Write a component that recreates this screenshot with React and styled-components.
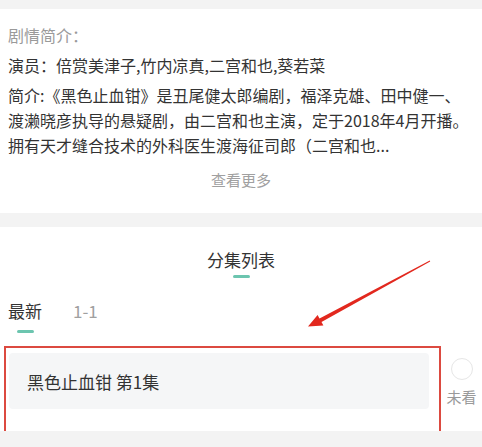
import React from "react";
import styled, { createGlobalStyle } from "styled-components";

const GlobalStyle = createGlobalStyle`
    body {
        margin: 0;
        background: #f3f3f3;
        font-family: "Noto Sans CJK SC", "Noto Sans", sans-serif;
        color: #333;
    }
`;

const Page = styled.div`
    width: 482px;
    padding-top: 9px;
    display: flex;
    flex-direction: column;
    gap: 14px;
`;

const Card = styled.section`
    position: relative;
    background: #fff;
    padding: ${(p) => p.$pad};
`;

const Label = styled.div`
    font-size: 16px;
    line-height: 26px;
    color: #9a9a9a;
`;

const Actors = styled.div`
    margin-top: 4px;
    font-size: 16px;
    line-height: 26px;
    color: #333;
`;

const Desc = styled.p`
    margin: 5px 0 0;
    font-size: 16px;
    line-height: 25px;
    color: #333;
`;

const More = styled.div`
    margin-top: 10px;
    text-align: center;
    font-size: 15px;
    line-height: 24px;
    color: #a0a0a0;
`;

const SectionTitle = styled.div`
    display: flex;
    flex-direction: column;
    align-items: center;
    font-size: 17px;
    line-height: 26px;
    color: #333;
`;

const Bar = styled.span`
    display: block;
    width: 17px;
    height: 3px;
    border-radius: 2px;
    background: #6cc5af;
    margin-top: ${(p) => p.$top}px;
    margin-left: ${(p) => p.$left || 0}px;
`;

const Tabs = styled.div`
    display: flex;
    gap: 31px;
    margin-top: 20px;
    padding-left: 8px;
`;

const Tab = styled.div`
    display: flex;
    flex-direction: column;
    font-size: 17px;
    line-height: 26px;
    color: ${(p) => (p.$active ? "#333" : "#a0a0a0")};
`;

const Row = styled.div`
    display: flex;
    margin-top: 20px;
    padding-left: 9px;
`;

const Episode = styled.div`
    width: 420px;
    height: 56px;
    box-sizing: border-box;
    padding-left: 18px;
    display: flex;
    align-items: center;
    background: #f5f6f7;
    border-radius: 4px;
    font-size: 17px;
    color: #333;
`;

const Status = styled.div`
    flex: 1;
    display: flex;
    flex-direction: column;
    align-items: center;
    padding-top: 5px;
    padding-left: 12px;
`;

const Circle = styled.span`
    width: 20px;
    height: 20px;
    border-radius: 50%;
    border: 1px solid #e6e6e6;
`;

const StatusText = styled.span`
    margin-top: 7px;
    font-size: 15px;
    line-height: 20px;
    color: #9a9a9a;
`;

const Highlight = styled.div`
    position: absolute;
    left: 4px;
    top: 119px;
    width: 437px;
    height: 87px;
    box-sizing: border-box;
    border: 2px solid #dc4a40;
    pointer-events: none;
`;

const ArrowLayer = styled.svg`
    position: absolute;
    left: 0;
    top: 0;
    pointer-events: none;
`;

export default function App() {
    return (
        <>
            <GlobalStyle />
            <Page>
                <Card $pad="13px 8px 21px">
                    <Label>剧情简介：</Label>
                    <Actors>演员：倍赏美津子,竹内凉真,二宫和也,葵若菜</Actors>
                    <Desc>
                        简介:《黑色止血钳》是丑尾健太郎编剧，福泽克雄、田中健一、
                        <br />
                        渡濑晓彦执导的悬疑剧，由二宫和也主演，定于2018年4月开播。
                        <br />
                        拥有天才缝合技术的外科医生渡海征司郎（二宫和也...
                    </Desc>
                    <More>查看更多</More>
                </Card>
                <Card $pad="20px 0 22px">
                    <SectionTitle>
                        分集列表
                        <Bar $top={2} />
                    </SectionTitle>
                    <Tabs>
                        <Tab $active>
                            最新
                            <Bar $top={6} $left={9} />
                        </Tab>
                        <Tab>1-1</Tab>
                    </Tabs>
                    <Row>
                        <Episode>黑色止血钳 第1集</Episode>
                        <Status>
                            <Circle />
                            <StatusText>未看</StatusText>
                        </Status>
                    </Row>
                    <Highlight />
                    <ArrowLayer width="482" height="130" viewBox="0 0 482 130">
                        <polygon
                            points="429.8,33.6 319.5,91.5 317.6,88 308,99.5 323.4,98.6 321.5,95.1 430.2,34.4"
                            fill="#e2281e"
                        />
                    </ArrowLayer>
                </Card>
            </Page>
        </>
    );
}
